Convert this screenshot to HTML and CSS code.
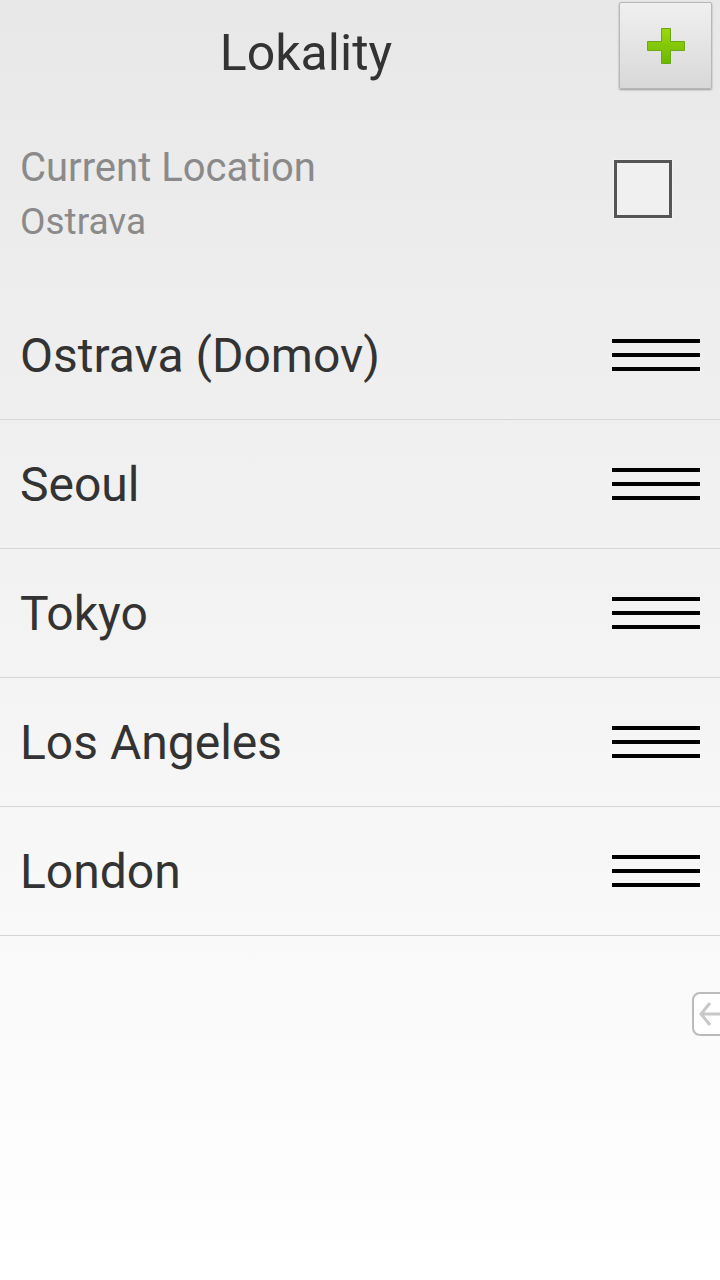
FILE: index.html
```html
<!DOCTYPE html>
<html>
<head>
<meta charset="utf-8">
<link rel="stylesheet" href="styles.css">
</head>
<body>
<div class="screen">
  <header class="header">
    <h1 class="title">Lokality</h1>
    <button class="add-btn" aria-label="Add">
      <svg width="40" height="38" viewBox="0 0 40 38">
        <defs>
          <linearGradient id="g" x1="0" y1="0" x2="0" y2="1">
            <stop offset="0" stop-color="#9ad80a"/>
            <stop offset="1" stop-color="#6cb800"/>
          </linearGradient>
        </defs>
        <path d="M15.5 1.5h9v13h14v9h-14v13h-9v-13h-14v-9h14z" fill="url(#g)" stroke="#6aa818" stroke-width="1" stroke-linejoin="round"/>
      </svg>
    </button>
  </header>
  <section class="current">
    <div class="current-text">
      <div class="current-label">Current Location</div>
      <div class="current-city">Ostrava</div>
    </div>
    <div class="checkbox"></div>
  </section>
  <ul class="list">
    <li class="row"><span class="city">Ostrava (Domov)</span><span class="handle"><i></i><i></i><i></i></span></li>
    <li class="row"><span class="city">Seoul</span><span class="handle"><i></i><i></i><i></i></span></li>
    <li class="row"><span class="city">Tokyo</span><span class="handle"><i></i><i></i><i></i></span></li>
    <li class="row"><span class="city">Los Angeles</span><span class="handle"><i></i><i></i><i></i></span></li>
    <li class="row"><span class="city">London</span><span class="handle"><i></i><i></i><i></i></span></li>
  </ul>
  <div class="side-tab">
    <svg width="28" height="44" viewBox="0 0 28 44">
      <path d="M14 11 L5 22 L14 33 M5 22 H28" fill="none" stroke="#c8c8c8" stroke-width="3"/>
    </svg>
  </div>
</div>
</body>
</html>
```
FILE: styles.css
```css
* { box-sizing: border-box; }
html, body { margin: 0; padding: 0; }
body {
  font-family: Roboto, "Noto Sans", sans-serif;
  width: 720px;
  height: 1280px;
  overflow: hidden;
}
.screen {
  position: relative;
  width: 720px;
  height: 1280px;
  background: linear-gradient(to bottom, #e8e8e8 0%, #f1f1f1 40%, #ffffff 100%);
}
.header {
  display: flex;
  align-items: flex-start;
  height: 100px;
}
.title {
  flex: 0 0 612px;
  margin: 0;
  height: 100px;
  line-height: 106px;
  text-align: center;
  font-weight: 400;
  font-size: 50px;
  color: #333;
}
.add-btn {
  margin: 2px 0 0 7px;
  width: 93px;
  height: 87px;
  padding: 0;
  border: 1px solid #b8b8b8;
  border-radius: 2px;
  background: linear-gradient(to bottom, #f0f0f0, #d8d8d8);
  box-shadow: 0 1px 2px rgba(0,0,0,0.35);
  display: flex;
  align-items: center;
  justify-content: center;
}
.current {
  display: flex;
  align-items: center;
  justify-content: space-between;
  height: 191px;
  padding: 0 48px 0 20px;
}
.current-text {
  margin-top: -2px;
  color: #8a8a8a;
}
.current-label {
  font-size: 40px;
  line-height: 54px;
}
.current-city {
  font-size: 37px;
  line-height: 54px;
}
.checkbox {
  width: 58px;
  height: 58px;
  border: 3px solid #555;
  background: #f0f0f0;
  box-shadow: 0 0 2px #fff;
  margin-top: -14px;
}
.list {
  list-style: none;
  margin: 0;
  padding: 0;
}
.row {
  display: flex;
  align-items: center;
  justify-content: space-between;
  height: 129px;
  padding: 0 20px 0 20px;
  border-bottom: 1px solid #d6d6d6;
}
.city {
  font-size: 48px;
  color: #333;
}
.handle {
  display: flex;
  flex-direction: column;
  gap: 10px;
  width: 88px;
}
.handle i {
  display: block;
  height: 4px;
  background: #000;
}
.side-tab {
  position: absolute;
  left: 692px;
  top: 992px;
  width: 40px;
  height: 44px;
  border: 2px solid #bbb;
  border-radius: 8px;
  background: #fff;
  overflow: hidden;
}
.side-tab svg { display: block; margin-left: 2px; margin-top: -2px; }
```
